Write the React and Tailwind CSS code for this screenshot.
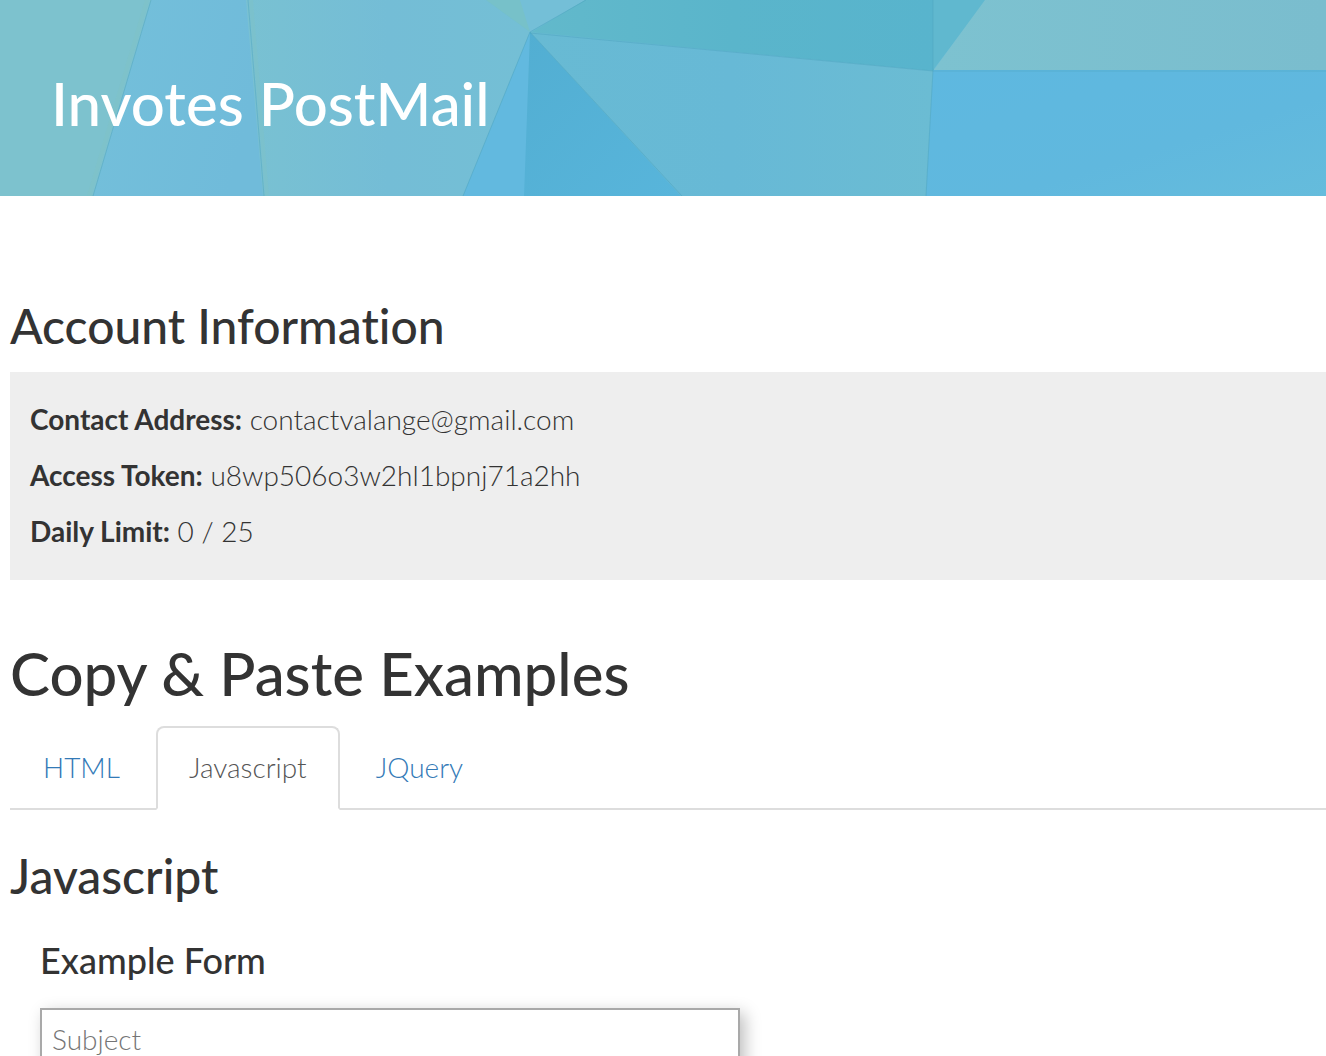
function HeaderArt() {
  return (
    <svg
      className="absolute inset-0 h-full w-full"
      viewBox="0 0 1326 196"
      preserveAspectRatio="xMinYMin slice"
      aria-hidden="true"
    >
      <defs>
        <linearGradient id="strip" x1="0" y1="0" x2="1" y2="0.3">
          <stop offset="0" stopColor="#74c0da" />
          <stop offset="1" stopColor="#70bbda" />
        </linearGradient>
        <linearGradient id="facet" x1="0" y1="0" x2="1" y2="0">
          <stop offset="0" stopColor="#79c1d2" />
          <stop offset="0.5" stopColor="#74bdd6" />
          <stop offset="1" stopColor="#74bfd5" />
        </linearGradient>
        <linearGradient id="teal" x1="0" y1="0" x2="1" y2="0">
          <stop offset="0" stopColor="#62b9cb" />
          <stop offset="0.5" stopColor="#5ab5cb" />
          <stop offset="1" stopColor="#58b4cd" />
        </linearGradient>
        <linearGradient id="deep" x1="0" y1="0" x2="1" y2="1">
          <stop offset="0" stopColor="#52aed2" />
          <stop offset="1" stopColor="#58b5db" />
        </linearGradient>
        <linearGradient id="middle" x1="0" y1="0" x2="1" y2="0">
          <stop offset="0" stopColor="#68bad3" />
          <stop offset="0.5" stopColor="#67b9d6" />
          <stop offset="1" stopColor="#6bbcd3" />
        </linearGradient>
        <linearGradient id="sage" x1="0" y1="0" x2="1" y2="0">
          <stop offset="0" stopColor="#7dc2d0" />
          <stop offset="1" stopColor="#7abdce" />
        </linearGradient>
        <linearGradient id="sky" x1="0" y1="0" x2="1" y2="1">
          <stop offset="0" stopColor="#5eb8e0" />
          <stop offset="0.6" stopColor="#60b8de" />
          <stop offset="1" stopColor="#65bcdc" />
        </linearGradient>
      </defs>
      <path d="M0 0H160L95 196H0Z" fill="#7dc2ce" />
      <path d="M151 0H248L264 196H93Z" fill="url(#strip)" />
      <path d="M246 0H486L530 32L463 196H263Z" fill="url(#facet)" />
      <path d="M517 0H586L530 32Z" fill="#74bfd7" />
      <path d="M486 0H520L530 32Z" fill="#77c1c9" />
      <path d="M585 0H934V71L530 33Z" fill="url(#teal)" />
      <path d="M933 0H986L933 70Z" fill="#60b8cf" />
      <path d="M530 32L525 196H463Z" fill="#62b9df" />
      <path d="M530 32L682 196H524Z" fill="url(#deep)" />
      <path d="M530 32L933 71L927 196H681Z" fill="url(#middle)" />
      <path d="M985 0H1326V71H933Z" fill="url(#sage)" />
      <path d="M933 70H1326V196H926Z" fill="url(#sky)" />
      <g fill="none" strokeWidth="1" stroke="#4ca1bd" strokeOpacity="0.45">
        <path d="M151 0L93 196M248 0L264 196M530 32L463 196M586 0L530 32M530 33L933 71M530 32L682 196M933 0V70L926 196M933 71H1326" />
      </g>
      <path
        d="M147 0L89 196M251 0L267 196"
        fill="none"
        stroke="#82c3c4"
        strokeWidth="4"
        strokeOpacity="0.35"
      />
    </svg>
  );
}

const account = [
  ["Contact Address:", "contactvalange@gmail.com"],
  ["Access Token:", "u8wp506o3w2hl1bpnj71a2hh"],
  ["Daily Limit:", "0 / 25"],
];

function Tab({ active, children }) {
  return (
    <a
      href={"#" + children.toLowerCase()}
      role="tab"
      aria-selected={active}
      className={
        active
          ? "-mb-[2px] rounded-t-lg border-2 border-[#ddd] border-b-white px-[31px] pt-[19px] pb-[21px] text-[#555]"
          : "-mb-[2px] rounded-t-lg border-2 border-transparent px-[31px] pt-[19px] pb-[21px] text-[#337ab7]"
      }
    >
      {children}
    </a>
  );
}

export default function App() {
  return (
    <div className="h-screen overflow-hidden bg-white font-['Lato',sans-serif] text-[28px] leading-10 font-light text-[#333] [font-variant-ligatures:none]">
      <header className="relative overflow-hidden bg-[#6bbcd6] px-[51px] pt-[70px] pb-[60px]">
        <HeaderArt />
        <h1 className="relative text-[60px] leading-[66px] font-medium text-white">Invotes PostMail</h1>
      </header>

      <main className="pt-[104px] pl-[10px]">
        <h2 className="text-[48px] leading-[52px] font-medium">Account Information</h2>
        <section className="mt-5 flex flex-col gap-4 bg-[#eee] px-5 pt-[27px] pb-[29px]">
          {account.map(([label, value]) => (
            <p key={label}>
              <strong className="font-bold">{label}</strong> {value}
            </p>
          ))}
        </section>

        <h1 className="mt-[60px] text-[60px] leading-[66px] font-medium">Copy &amp; Paste Examples</h1>
        <div role="tablist" className="mt-5 flex gap-[3px] border-b-2 border-[#ddd]">
          <Tab active={false}>HTML</Tab>
          <Tab active={true}>Javascript</Tab>
          <Tab active={false}>JQuery</Tab>
        </div>

        <h2 className="mt-10 text-[48px] leading-[52px] font-medium">Javascript</h2>
        <form className="mt-[38px] px-[30px]">
          <h3 className="text-[36px] leading-10 font-medium">Example Form</h3>
          <input
            type="text"
            aria-label="Subject"
            placeholder="Subject"
            className="mt-7 block w-full max-w-[700px] border-2 border-[#a9a9a9] bg-white px-[10px] pt-[9px] pb-[11px] shadow-[5px_5px_15px_rgba(0,0,0,0.25)] placeholder:text-[#757575]"
          />
        </form>
      </main>
    </div>
  );
}
